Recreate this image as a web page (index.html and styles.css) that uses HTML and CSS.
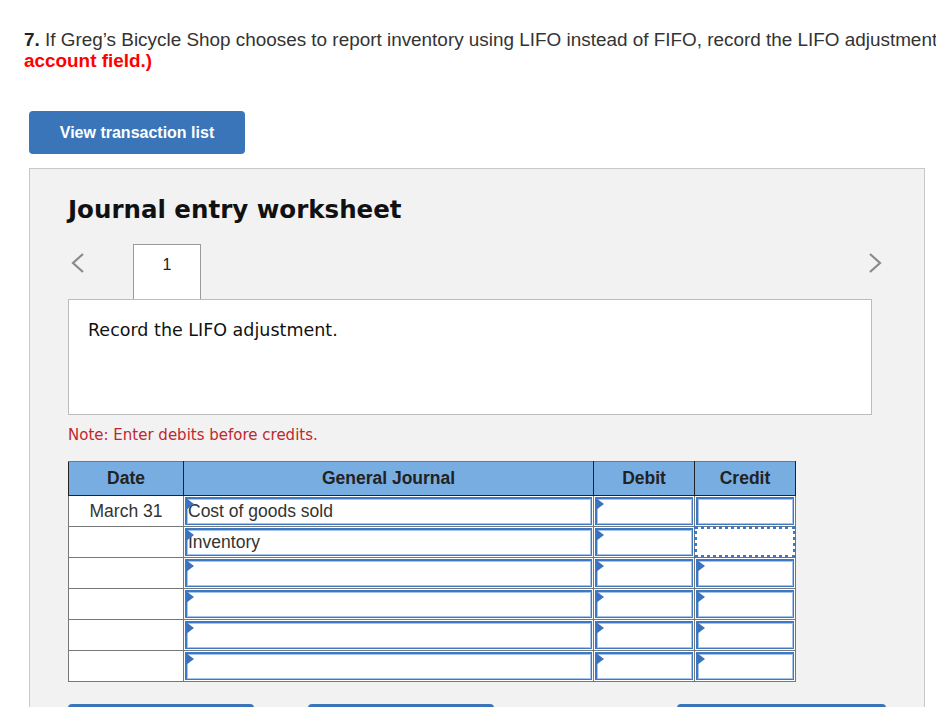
FILE: index.html
```html
<!DOCTYPE html>
<html lang="en">
<head>
    <meta charset="UTF-8">
    <title>Journal entry worksheet</title>
    <link rel="stylesheet" href="styles.css">
</head>
<body>

<div class="page">
    <p class="question"><b>7.</b> If Greg’s Bicycle Shop chooses to report inventory using LIFO instead of FIFO, record the LIFO adjustment. <span class="hint">(If no entry is required for a transaction/event, select "No journal entry required" in the first<br>account field.)</span></p>

    <button class="btn-list">View transaction list</button>

    <div class="worksheet">
        <h2>Journal entry worksheet</h2>

        <div class="tab-nav">
            <svg class="chev" width="20" height="24" viewBox="0 0 20 24"><polyline points="15,3 5,12 15,21" fill="none" stroke="#8a8a8a" stroke-width="2.2"/></svg>
            <div class="tab">1</div>
            <svg class="chev chev-right" width="20" height="24" viewBox="0 0 20 24"><polyline points="5,3 15,12 5,21" fill="none" stroke="#8a8a8a" stroke-width="2.2"/></svg>
        </div>

        <div class="task">Record the LIFO adjustment.</div>

        <p class="note">Note: Enter debits before credits.</p>

        <table class="journal">
            <tr>
                <th class="c-date">Date</th>
                <th class="c-acc">General Journal</th>
                <th class="c-num">Debit</th>
                <th class="c-num">Credit</th>
            </tr>
            <tr>
                <td class="date">March 31</td>
                <td><div class="field flag">Cost of goods sold</div></td>
                <td><div class="field flag"></div></td>
                <td><div class="field"></div></td>
            </tr>
            <tr>
                <td class="date"></td>
                <td><div class="field flag">Inventory</div></td>
                <td><div class="field flag"></div></td>
                <td><div class="field focus"></div></td>
            </tr>
            <tr>
                <td class="date"></td>
                <td><div class="field flag"></div></td>
                <td><div class="field flag"></div></td>
                <td><div class="field flag"></div></td>
            </tr>
            <tr>
                <td class="date"></td>
                <td><div class="field flag"></div></td>
                <td><div class="field flag"></div></td>
                <td><div class="field flag"></div></td>
            </tr>
            <tr>
                <td class="date"></td>
                <td><div class="field flag"></div></td>
                <td><div class="field flag"></div></td>
                <td><div class="field flag"></div></td>
            </tr>
            <tr>
                <td class="date"></td>
                <td><div class="field flag"></div></td>
                <td><div class="field flag"></div></td>
                <td><div class="field flag"></div></td>
            </tr>
        </table>

        <div class="actions">
            <button class="btn-act">Record entry</button>
            <button class="btn-act">Clear entry</button>
            <span class="grow"></span>
            <button class="btn-act wide">View general journal</button>
        </div>
    </div>
</div>

</body>
</html>
```

FILE: styles.css
```css
html, body {
    overflow: hidden;
}
body {
    margin: 0;
    background: #fff;
    font-family: "Liberation Sans", Arial, sans-serif;
    color: #333;
}
.page {
    width: 2200px;
    padding: 29px 0 0 24px;
}
.question {
    margin: 0;
    font-size: 18.9px;
    line-height: 21px;
    white-space: nowrap;
    color: #333;
}
.question b {
    color: #222;
}
.hint {
    color: #f00;
    font-weight: bold;
}

.btn-list {
    display: block;
    margin: 40px 0 0 5px;
    width: 216px;
    height: 43px;
    border: none;
    border-radius: 4px;
    background: #3a75b9;
    color: #fff;
    font-family: "Liberation Sans", Arial, sans-serif;
    font-weight: bold;
    font-size: 16px;
}

.worksheet {
    margin: 14px 0 0 5px;
    width: 804px;
    height: 560px;
    padding: 25px 52px 0 38px;
    background: #f2f2f2;
    border: 1px solid #c8c8c8;
    font-family: "DejaVu Sans", Verdana, sans-serif;
}
.worksheet h2 {
    margin: 0;
    font-size: 24.5px;
    line-height: 32px;
    color: #111;
}

.tab-nav {
    display: flex;
    align-items: flex-start;
    margin: 18px -13px 0 0;
    position: relative;
    z-index: 1;
}
.chev {
    display: block;
    margin-top: 7px;
}
.chev-right {
    margin-left: auto;
}
.tab {
    margin-left: 45px;
    width: 66px;
    height: 54px;
    background: #fff;
    border: 1px solid #9a9a9a;
    border-bottom: none;
    text-align: center;
    font-family: "Liberation Sans", Arial, sans-serif;
    font-size: 16px;
    line-height: 40px;
    color: #222;
}

.task {
    height: 94px;
    padding: 20px 19px 0;
    background: #fff;
    border: 1px solid #bcbcbc;
    font-size: 17.5px;
    color: #111;
}

.note {
    margin: 11px 0 0;
    font-size: 15px;
    color: #c0282d;
}

.journal {
    margin-top: 17px;
    border-collapse: collapse;
    font-family: "Liberation Sans", Arial, sans-serif;
    font-size: 17.5px;
}
.journal th {
    height: 33px;
    padding: 0;
    background: #78ade2;
    border: 1px solid #222;
    border-top-color: #777;
    color: #222;
    font-weight: bold;
}
.c-date { width: 114px; }
.c-acc { width: 409px; }
.c-num { width: 100px; }
.journal td {
    padding: 1px;
    background: #fff;
    border: 1px solid #777;
}
.journal td.date {
    padding: 0;
    text-align: center;
    color: #333;
}
.field {
    position: relative;
    box-sizing: border-box;
    height: 28px;
    border: 1px solid #3d78c2;
    box-shadow: inset 1px 1px 0 #3d78c2, inset -1px -1px 0 #a6c4ea, inset 2px 2px 0 #a6c4ea;
    padding-left: 2px;
    line-height: 26px;
    color: #333;
    white-space: nowrap;
}
.flag::before {
    content: "";
    position: absolute;
    left: 0;
    top: 0;
    width: 0;
    height: 0;
    border-left: 8px solid #3a72bf;
    border-top: 6px solid transparent;
    border-bottom: 6px solid transparent;
    z-index: 2;
}
.focus {
    border: 3px dotted #3d78c2;
    box-shadow: none;
    margin: -2px -2px;
    height: 32px;
}

.actions {
    display: flex;
    gap: 54px;
    margin-top: 22px;
    width: 818px;
}
.grow {
    flex: 1;
}
.btn-act {
    width: 186px;
    height: 40px;
    border: none;
    border-radius: 4px;
    background: #3a75b9;
    color: #fff;
    font-weight: bold;
    font-family: "Liberation Sans", Arial, sans-serif;
    font-size: 16px;
}
.btn-act.wide {
    width: 209px;
}
```
